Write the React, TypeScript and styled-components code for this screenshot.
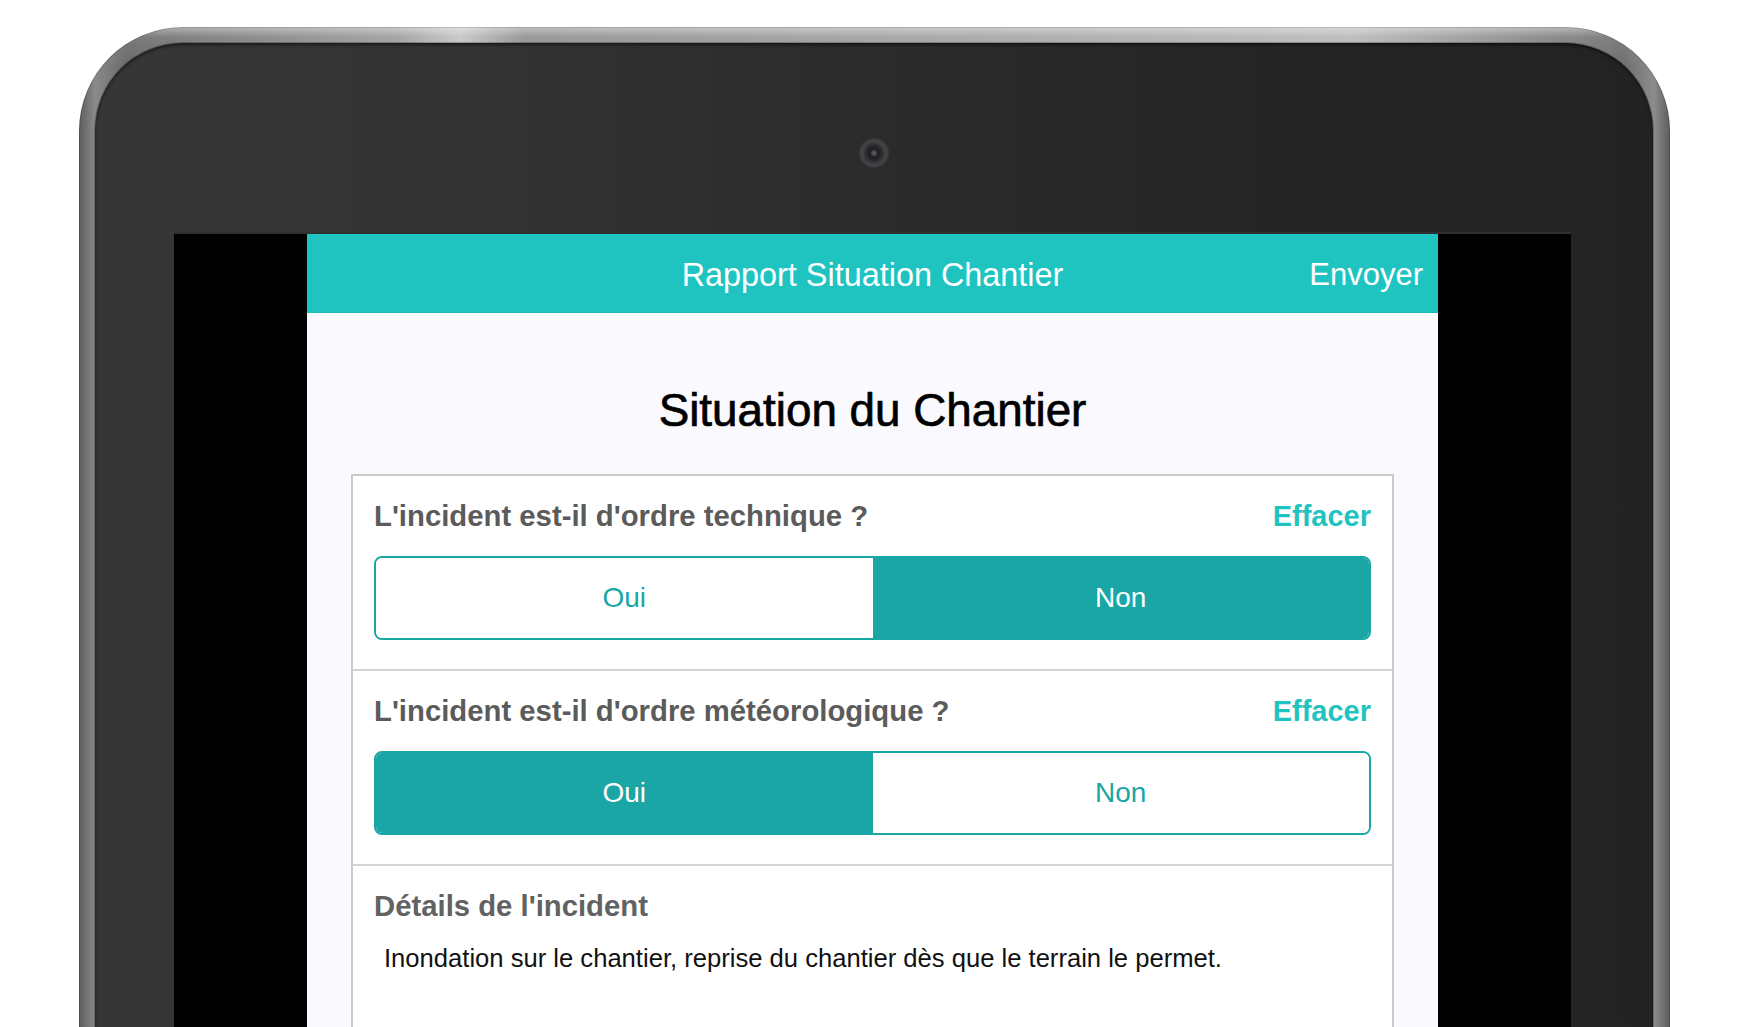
import React from "react";
import styled, { createGlobalStyle } from "styled-components";

const GlobalStyle = createGlobalStyle`
  html, body {
    margin: 0;
    padding: 0;
    background: #ffffff;
  }
  body {
    font-family: "Liberation Sans", Arial, Helvetica, sans-serif;
    overflow: hidden;
  }
  * { box-sizing: border-box; }
`;

const Page = styled.div`
  width: 1750px;
  height: 1027px;
  overflow: hidden;
  background: #ffffff;
  padding: 27px 0 0 79px;
`;

const Device = styled.div`
  width: 1591px;
  height: 1200px;
  border-radius: 104px;
  padding: 16px 17px 0 16px;
  background:
    linear-gradient(180deg, rgba(255, 255, 255, 0.45) 0px, rgba(255, 255, 255, 0.1) 10px, rgba(255, 255, 255, 0) 40px),
    linear-gradient(90deg, #5c5c5c 0%, #8a8a8a 1%, #6a6a6a 3%, #9c9c9c 20%, #c4c4c4 24%, #8e8e8e 28%, #a6a6a6 60%, #b8b8b8 80%, #6e6e6e 97%, #8c8c8c 99%, #5c5c5c 100%);
  box-shadow: inset 0 0 0 1px rgba(0, 0, 0, 0.15);
`;

const Bezel = styled.div`
  height: 100%;
  border-radius: 88px;
  padding: 0 82px 0 79px;
  display: flex;
  flex-direction: column;
  background: linear-gradient(90deg, #363636 0%, #333333 25%, #2b2b2b 50%, #252525 75%, #232323 100%);
  box-shadow: inset 0 2px 3px rgba(0, 0, 0, 0.5), 0 0 0 1px rgba(0, 0, 0, 0.25);
`;

const TopBezel = styled.div`
  height: 191px;
  display: flex;
  justify-content: center;
  padding: 94px 0 0 3px;
`;

const Camera = styled.div`
  width: 32px;
  height: 32px;
  border-radius: 50%;
  background: radial-gradient(circle, #606064 0px, #4a4a4e 2px, #1e1e20 4px, #262628 7px, #3a3a3e 10px, #46464a 12.5px, rgba(60, 60, 64, 0.6) 14.5px, rgba(40, 40, 42, 0) 16px);
`;

const Screen = styled.div`
  flex: 1;
  display: flex;
  justify-content: center;
  background: #000000;
  box-shadow: 0 -2px 0 #303030;
`;

const AppView = styled.div`
  width: 1131px;
  display: flex;
  flex-direction: column;
  background: #f9f9fe;
`;

const Header = styled.header`
  height: 79px;
  display: grid;
  grid-template-columns: 1fr auto 1fr;
  align-items: center;
  padding: 4px 15px 0;
  background: #1fc4c1;
  border-bottom: 1px solid #1bb8b5;
  color: #ffffff;
  font-size: 32px;
`;

const HeaderTitle = styled.div`
  grid-column: 2;
  font-size: 32.4px;
`;

const HeaderAction = styled.button`
  justify-self: end;
  background: none;
  border: none;
  padding: 0;
  color: #ffffff;
  font-family: inherit;
  font-size: 31px;
  cursor: pointer;
`;

const Title = styled.h1`
  margin: 72px 0 37px;
  line-height: 52px;
  text-align: center;
  font-size: 45.8px;
  font-weight: 400;
  color: #000000;
  -webkit-text-stroke: 0.7px #000000;
`;

const Card = styled.div`
  flex: 1;
  margin: 0 44px;
  background: #ffffff;
  border: 2px solid #cbcbcb;
  border-bottom: none;
`;

const Section = styled.section`
  padding: 23px 21px 29px;
  border-top: 2px solid #d3d3d3;
  &:first-child {
    border-top: none;
  }
`;

const QuestionRow = styled.div`
  height: 34px;
  display: flex;
  align-items: center;
  justify-content: space-between;
  margin-bottom: 23px;
`;

const Question = styled.div`
  font-size: 29.3px;
  line-height: 34px;
  font-weight: 700;
  color: #5b5b5b;
`;

const ClearButton = styled.button`
  background: none;
  border: none;
  padding: 0;
  font-family: inherit;
  font-size: 29px;
  line-height: 34px;
  font-weight: 700;
  color: #1fc4c1;
  cursor: pointer;
`;

const Segmented = styled.div`
  height: 84px;
  display: flex;
  border: 2px solid #19a6a4;
  border-radius: 8px;
  overflow: hidden;
`;

const Option = styled.button<{ $active: boolean }>`
  flex: 1;
  display: flex;
  align-items: center;
  justify-content: center;
  border: none;
  padding: 0;
  font-family: inherit;
  font-size: 28px;
  background: ${(p) => (p.$active ? "#19a6a4" : "#ffffff")};
  color: ${(p) => (p.$active ? "#ffffff" : "#19a6a4")};
  cursor: pointer;
`;

const DetailsTitle = styled(Question)`
  color: #626262;
  margin-bottom: 20px;
`;

const DetailsText = styled.p`
  margin: 0;
  padding-left: 10px;
  font-size: 25.6px;
  line-height: 30px;
  color: #111111;
`;

type QuestionData = { label: string; value: "Oui" | "Non" };

const questions: QuestionData[] = [
  { label: "L'incident est-il d'ordre technique ?", value: "Non" },
  { label: "L'incident est-il d'ordre météorologique ?", value: "Oui" },
];

export default function App() {
  return (
    <>
      <GlobalStyle />
      <Page>
        <Device>
          <Bezel>
            <TopBezel>
              <Camera />
            </TopBezel>
            <Screen>
              <AppView>
                <Header>
                  <HeaderTitle>Rapport Situation Chantier</HeaderTitle>
                  <HeaderAction>Envoyer</HeaderAction>
                </Header>
                <Title>Situation du Chantier</Title>
                <Card>
                  {questions.map((q) => (
                    <Section key={q.label}>
                      <QuestionRow>
                        <Question>{q.label}</Question>
                        <ClearButton>Effacer</ClearButton>
                      </QuestionRow>
                      <Segmented>
                        <Option $active={q.value === "Oui"}>Oui</Option>
                        <Option $active={q.value === "Non"}>Non</Option>
                      </Segmented>
                    </Section>
                  ))}
                  <Section>
                    <DetailsTitle>Détails de l'incident</DetailsTitle>
                    <DetailsText>
                      Inondation sur le chantier, reprise du chantier dès que le terrain le permet.
                    </DetailsText>
                  </Section>
                </Card>
              </AppView>
            </Screen>
          </Bezel>
        </Device>
      </Page>
    </>
  );
}
